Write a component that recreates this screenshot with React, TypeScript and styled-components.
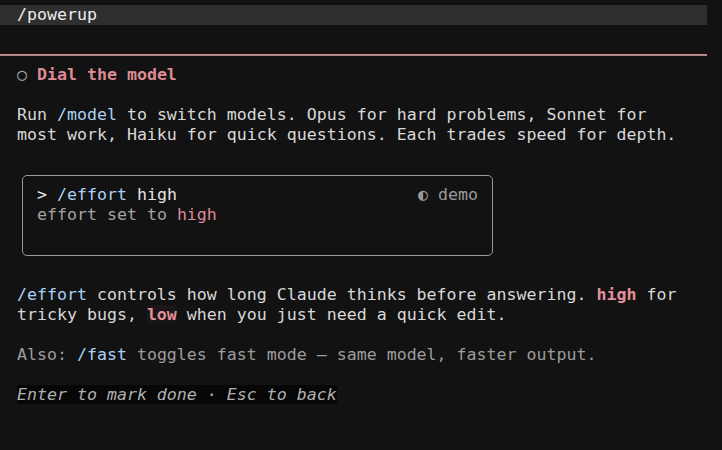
import React from "react";
import styled, { createGlobalStyle } from "styled-components";

const Global = createGlobalStyle`
  html, body { margin: 0; padding: 0; background: #121212; }
  body {
    font-family: "DejaVu Sans Mono", "Liberation Mono", monospace;
    font-size: 16.6px;
    line-height: 20px;
    color: #d6d6d6;
  }
`;

const Screen = styled.div`
  width: 722px;
  height: 450px;
  overflow: hidden;
  background: #121212;
  padding-top: 5px;
  box-sizing: border-box;
`;

const TopBar = styled.div`
  width: 707px;
  height: 20px;
  background: #2f2f2f;
  box-sizing: border-box;
  padding-left: 17px;
  color: #ececec;
  white-space: pre;
`;

const Separator = styled.div`
  width: 707px;
  height: 2px;
  margin-top: 29px;
  background: linear-gradient(#d2828c 0 1px, #9c8a8d 1px 2px);
`;

const Body = styled.div`
  padding-left: 17px;
  white-space: pre;
`;

const Heading = styled.div`
  margin-top: 9px;
  display: flex;
  align-items: center;
`;

const Circle = styled.span`
  display: inline-block;
  width: 10px;
  height: 20px;
  margin-right: 10px;
  color: #a8a8a8;
`;

const Title = styled.span`
  color: #de8b94;
  font-weight: bold;
`;

const Para = styled.div<{ $mt: number; $dim?: boolean }>`
  margin-top: ${(p) => p.$mt}px;
  color: ${(p) => (p.$dim ? "#9c9c9c" : "#d8d8d8")};
`;

const Cmd = styled.span`
  color: #a9d1f5;
`;

const Hot = styled.span<{ $bg?: boolean }>`
  color: #e2909a;
  font-weight: bold;
  background: ${(p) => (p.$bg ? "#1a1617" : "transparent")};
`;

const DemoBox = styled.div`
  margin-top: 30px;
  margin-left: 5px;
  width: 471px;
  height: 81px;
  box-sizing: border-box;
  border: 1px solid #9a9a9a;
  border-radius: 5px;
  padding: 9px 14px 0 14px;
`;

const DemoRow = styled.div`
  display: flex;
  justify-content: space-between;
`;

const Prompt = styled.span`
  color: #e4e4e4;
`;

const Tag = styled.span`
  color: #9a9a9a;
`;

const Output = styled.div`
  color: #a2a2a2;
`;

const Soft = styled.span`
  color: #dc8c95;
`;

const Hint = styled.div`
  margin-top: 20px;
`;

const HintText = styled.span`
  font-style: italic;
  color: #b0b0b0;
  background: #070707;
`;

export default function App() {
  return (
    <>
      <Global />
      <Screen>
        <TopBar>/powerup</TopBar>
        <Separator />
        <Body>
          <Heading>
            <Circle>○</Circle>
            <Title>Dial the model</Title>
          </Heading>
          <Para $mt={20}>
            Run <Cmd>/model</Cmd> to switch models. Opus for hard problems, Sonnet for{"\n"}
            most work, Haiku for quick questions. Each trades speed for depth.
          </Para>
        </Body>
        <Body>
          <DemoBox>
            <DemoRow>
              <Prompt>
                &gt; <Cmd>/effort</Cmd> high
              </Prompt>
              <Tag>◐ demo</Tag>
            </DemoRow>
            <Output>
              effort set to <Soft>high</Soft>
            </Output>
          </DemoBox>
          <Para $mt={29}>
            <Cmd>/effort</Cmd> controls how long Claude thinks before answering. <Hot>high</Hot> for{"\n"}
            tricky bugs, <Hot $bg>low</Hot> when you just need a quick edit.
          </Para>
          <Para $mt={20} $dim>
            Also: <Cmd>/fast</Cmd> toggles fast mode — same model, faster output.
          </Para>
          <Hint>
            <HintText>Enter to mark done · Esc to back</HintText>
          </Hint>
        </Body>
      </Screen>
    </>
  );
}
